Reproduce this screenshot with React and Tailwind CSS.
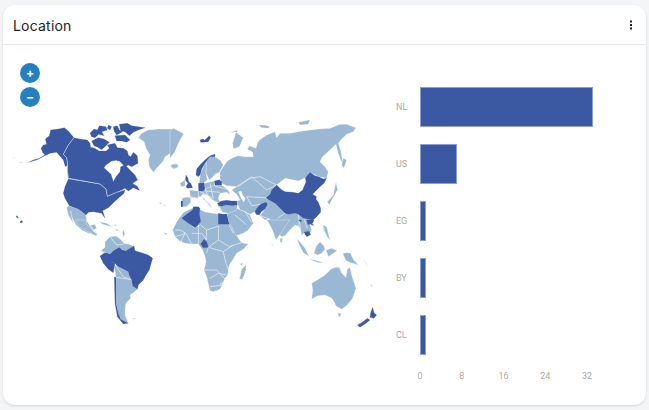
const D = "#3b58a3";
const L = "#9ab7d3";

// groups are traced in zoomed (3x) crop coordinates
const na = {
  t: "translate(0,115) scale(0.3333)",
  white: [],
  dark: [
    "85,142 100,135 118,130 135,120 128,112 123,100 130,90 140,88 136,72 148,62 152,45 175,42 193,38 205,48 222,68 205,90 190,118 200,128 203,150 196,155 190,135 170,112 150,115 135,122 110,135",
    "222,68 240,72 262,75 270,85 272,97 285,100 297,108 318,108 328,100 322,90 345,85 352,98 370,100 382,108 385,120 392,125 400,112 412,122 414,145 395,155 385,150 375,155 368,148 355,135 335,138 318,150 312,158 325,170 333,178 340,200 348,185 360,170 362,155 375,150 390,165 405,180 413,195 398,205 405,212 418,226 400,218 385,228 375,220 352,232 322,244 318,222 300,207 205,190 202,160 203,150 200,128 190,118 205,90",
    "205,192 300,208 318,222 322,244 350,232 375,224 372,235 355,250 342,262 325,278 308,287 315,310 305,295 280,290 265,292 258,300 248,292 235,282 208,272 195,250 190,235 195,215",
    "270,55 282,42 292,45 298,32 318,35 322,45 305,50 312,62 296,58 285,68 275,65",
    "325,30 335,35 330,45 322,40",
    "340,35 352,32 358,45 368,50 350,60 342,48",
    "358,28 382,25 395,32 435,38 415,45 400,52 388,62 375,50 362,48",
    "275,78 295,68 312,72 328,82 318,92 305,104 292,96 282,92",
    "345,62 375,60 390,75 380,82 365,78 350,78",
    "350,130 365,128 368,136 352,138",
    "60,320 66,316 68,322 62,324",
    "50,302 55,306 54,310 48,305",
    "402,208 412,214 418,226 405,218",
  ],
  light: [
    "205,272 235,282 248,292 258,300 260,318 270,332 285,328 290,340 278,346 268,356 245,345 228,330 215,305 212,288 220,325 205,300 200,278",
    "415,68 425,55 445,45 475,42 525,42 535,50 552,58 540,75 532,90 520,105 512,115 495,125 490,138 470,160 460,172 448,155 445,135 450,120 438,100 432,80",
    "510,152 528,145 536,155 520,162",
    "300,320 320,325 338,335 322,332 305,326",
    "345,342 358,345 350,348",
    "478,262 486,265 480,268",
    "492,268 498,270 494,274",
    "40,125 44,128 42,130",
    "58,140 68,142 62,144",
  ],
  lines: ["270,335 285,350"],
};

const sa = {
  t: "translate(60,220) scale(0.3333)",
  white: [],
  dark: [
    "150,103 160,92 178,82 186,90 198,92 210,85 222,78 225,92 245,98 265,105 278,115 272,135 268,150 258,165 250,180 235,195 232,208 218,198 215,180 207,165 205,155 185,145 172,138 165,130 150,125",
    "120,108 132,100 140,98 150,103 150,125 165,130 162,145 160,158 145,148 130,130",
    "163,170 168,172 168,210 168,250 175,280 182,298 205,310 190,312 172,290 165,250",
    "422,72 432,58 440,65 445,82 430,83",
  ],
  light: [
    "45,0 78,0 80,15 90,22 98,32 112,42 108,48 92,40 75,30 58,22",
    "122,92 135,82 135,65 150,50 168,48 178,55 192,70 205,72 222,78 210,85 198,92 186,90 178,82 160,92 150,103 140,98 132,100",
    "162,135 172,138 185,145 205,155 207,165 215,180 218,198 232,208 220,218 210,225 212,235 198,250 195,270 195,285 205,310 182,298 175,280 168,250 168,172",
    "338,30 350,5 369,-21 385,-30 405,-39 435,-24 474,-18 504,-15 512,5 520,30 535,55 545,68 565,72 550,88 530,100 518,120 508,135 505,150 503,165 495,175 480,208 460,215 450,212 440,170 432,150 438,125 435,110 428,90 415,72 395,72 375,70 358,62 345,50",
    "545,148 558,135 558,150 548,178 538,178",
    "312,38 322,40 318,44",
    "218,294 226,294 222,298",
    "190,28 187,38 192,55 194,40",
    "162,12 172,18 165,18",
    "540,132 548,128 546,138",
  ],
  lines: [
    "345,30 360,30 378,40 395,72",
    "378,0 402,24 422,15 440,30 438,60",
    "476,12 506,12 520,40",
    "440,30 476,18 475,60 445,82 440,100",
    "475,60 508,80 545,68",
    "445,82 490,95 498,130 505,150",
    "432,150 470,150 498,180",
    "360,70 375,40",
    "450,175 475,160 500,165",
    "450,200 490,195",
    "150,50 170,75 192,72",
    "122,92 150,103",
    "165,135 190,170 215,180",
    "168,172 210,178",
    "100,28 85,10",
    "395,40 425,40 440,60",
    "505,-15 505,12",
    "415,15 415,72",
    "345,50 378,40",
    "490,95 520,75",
    "480,190 490,188 486,196 480,190",
  ],
};

const eu = {
  t: "translate(170,115) scale(0.3333)",
  white: [
    "205,230 214,228 218,240 226,250 222,262 213,250",
    "148,240 165,236 178,245 172,252 152,250",
    "430,238 445,240 438,252 428,248",
  ],
  dark: [
    "320,210 332,222 345,230 368,232 385,235 398,225 408,200 406,188 420,172 435,182 446,185 460,192 470,190 462,205 450,215 435,230 428,238 440,245 438,252 445,262 452,280 452,292 440,305 428,316 412,312 400,310 385,298 375,295 355,298 345,295 330,280 315,265 298,256 288,248 300,238 305,225",
    "255,290 262,278 272,268 288,262 292,268 285,282 274,290 268,300 258,298",
    "142,265 155,258 170,256 185,258 200,258 202,270 188,272 170,270 155,274 146,272",
    "35,310 50,298 68,285 70,275 85,275 90,280 88,295 92,320 76,338 60,328",
    "145,295 158,298 170,297 175,318 178,328 145,328",
    "48,180 54,190 56,200 62,205 68,218 52,220 48,215 54,205 46,195",
    "78,180 80,162 90,150 105,135 120,122 135,118 135,125 120,125 108,140 96,160 90,180 85,185",
    "85,205 102,203 105,222 100,228 86,228",
    "133,198 148,194 155,200 155,210 135,210",
    "90,75 100,72 104,76 118,62 122,68 115,80 100,82 92,82",
    "33,258 38,258 38,275 33,275",
    "420,322 426,322 424,330",
    "404,352 414,352 416,360 406,360",
  ],
  light: [
    "150,170 160,155 172,138 188,128 205,122 225,125 250,125 248,112 232,102 238,92 258,100 262,85 268,75 290,60 315,50 320,68 330,55 360,55 385,50 420,45 445,42 480,40 510,28 530,28 558,38 550,50 530,58 515,72 505,85 512,105 520,150 510,130 503,110 498,88 480,105 458,125 450,140 465,155 475,170 470,190 446,185 420,172 406,188 385,198 345,190 320,210 290,225 245,185 200,215 170,212 155,205 150,190",
    "200,215 245,185 290,225 320,210 305,225 300,238 288,248 298,256 315,265 330,280 345,295 375,295 385,298 400,310 390,335 375,330 360,345 345,362 335,365 322,352 312,325 295,312 285,315 270,302 285,282 255,290 240,298 225,290 210,285 200,258 210,255 200,238 185,225",
    "385,298 400,310 412,312 428,316 420,330 425,345 415,360 405,350 395,362 392,345 385,330",
    "170,290 195,275 210,285 225,290 240,300 250,325 235,345 220,355 198,362 185,335 175,318",
    "145,272 155,274 170,270 188,272 202,270 200,285 175,295 158,292",
    "36,250 50,246 62,248 62,262 50,275 36,275",
    "58,225 85,228 86,240 85,250 62,248",
    "85,228 100,228 105,222 133,210 155,210 175,225 180,240 170,232 150,235 145,250 150,262 142,262 128,255 112,240 98,238 92,245 85,245",
    "98,245 108,258 122,270 125,280 112,264 100,252",
    "108,140 120,125 135,125 150,135 160,150 148,172 135,178 125,190 118,195 108,175",
    "108,140 98,160 90,180 88,205 102,203 112,195 108,175",
    "103,205 133,198 133,212 105,222",
    "0,45 10,40 40,55 25,85 15,110 0,130",
    "5,148 25,148 20,160 5,158",
    "30,205 45,195 46,212 34,215",
    "198,52 220,68 208,95 190,102 188,85",
    "265,30 285,30 300,35 295,40 275,38",
    "180,52 205,45 200,52",
    "385,22 420,14 415,28 390,30",
    "498,200 503,225 488,250 478,270 472,260 490,240",
    "458,330 472,345 462,350",
    "520,130 530,135 522,160 515,150",
  ],
  lines: [
    "205,215 240,190 270,185 290,195 320,210",
    "230,245 285,248 290,250",
    "230,245 245,272 272,268",
    "270,302 300,312",
    "385,298 392,345",
    "402,312 412,340",
    "225,290 245,322",
    "195,300 230,330",
    "90,230 130,250",
    "105,228 150,232",
    "120,205 130,250",
    "100,205 112,240",
    "60,245 85,250",
    "345,295 322,310",
    "133,212 175,225",
  ],
};

const oc = {
  t: "translate(260,220) scale(0.3333)",
  white: [],
  dark: [
    "132,36 148,34 152,44 140,50",
    "115,0 125,0 122,6",
    "140,0 162,0 158,10 144,14",
    "338,262 342,278 350,285 342,295 330,292 332,278",
    "292,315 305,308 322,295 330,300 318,310 300,322",
    "153,13 160,13 160,17",
  ],
  light: [
    "20,0 90,0 78,15 68,32 55,50 48,60 38,32 28,12",
    "110,55 122,68 135,85 148,110 130,98 118,75",
    "162,100 168,80 180,65 192,78 195,88 185,100 172,105",
    "145,117 165,120 190,128 175,128",
    "190,15 200,20 205,40 210,62 200,48 195,35",
    "198,90 215,85 232,92 220,100 205,110",
    "248,100 262,98 272,100 280,118 295,135 272,128 258,122",
    "155,190 175,178 195,165 205,155 212,148 225,142 238,142 245,160 258,172 262,148 270,142 275,165 288,205 278,235 262,255 245,268 228,258 222,245 215,235 195,225 172,228 155,238 158,210",
    "232,280 244,280 240,293",
    "60,55 68,55 66,68 60,65",
    "305,115 325,135 320,132",
    "330,192 338,198 335,200",
    "35,70 38,75 36,78",
    "378,178 382,180 380,185",
  ],
  lines: [],
};

function MapGroup({ g }) {
  return (
    <g transform={g.t} strokeLinejoin="round">
      {g.light.map((p, i) => (
        <polygon key={`l${i}`} points={p} fill={L} stroke="#ffffff" strokeWidth="1" />
      ))}
      {g.white.map((p, i) => (
        <polygon key={`w${i}`} points={p} fill="#ffffff" />
      ))}
      {g.lines.map((p, i) => (
        <polyline key={`x${i}`} points={p} fill="none" stroke="#e8eef5" strokeWidth="2.2" />
      ))}
      {g.dark.map((p, i) => (
        <polygon key={`d${i}`} points={p} fill={D} stroke={D} strokeWidth="0.6" />
      ))}
    </g>
  );
}

function BorderLines() {
  return (
    <g transform="translate(0,115) scale(0.3333)" fill="none" stroke="#c4cfe4" strokeWidth="2.4" strokeLinejoin="round">
      <polyline points="222,68 205,90 190,118 200,128 203,150 202,165 205,190 300,207 318,222 322,244 350,232 375,224" />
    </g>
  );
}

const bars = [
  { c: "NL", w: 173 },
  { c: "US", w: 37 },
  { c: "EG", w: 6 },
  { c: "BY", w: 6 },
  { c: "CL", w: 6 },
];
const ticks = ["0", "8", "16", "24", "32"];

export default function App() {
  return (
    <div className="w-[649px] h-[410px] bg-[#f4f5f7] pt-[5px] px-[3px] overflow-hidden" style={{ fontFamily: "Inter, 'Liberation Sans', sans-serif" }}>
      <div className="w-[643px] h-[400px] bg-white rounded-xl shadow-sm flex flex-col overflow-hidden">
        <div className="h-[40px] shrink-0 border-b border-[#e8e8e8] flex items-center justify-between pl-[10px] pr-[13px] pt-[2px]">
          <span className="text-[14px] text-[#222222] tracking-[0.2px]">Location</span>
          <svg width="4" height="10" viewBox="0 0 4 10" fill="#222222" className="-mt-[2px]">
            <rect x="1" y="0.5" width="2" height="2" />
            <rect x="1" y="4" width="2" height="2" />
            <rect x="1" y="7.5" width="2" height="2" />
          </svg>
        </div>
        <div className="flex flex-1">
          <div className="relative w-[381px] shrink-0">
            <svg className="block" width="381" height="360" viewBox="3 45 381 360">
              <MapGroup g={na} />
              <MapGroup g={sa} />
              <MapGroup g={eu} />
              <MapGroup g={oc} />
              <BorderLines />
            </svg>
            <div className="absolute left-[17px] top-[18px] flex flex-col gap-[4px]">
              <button className="w-5 h-5 rounded-full bg-[#2481bd] text-white text-[12px] font-bold leading-none flex items-center justify-center">+</button>
              <button className="w-5 h-5 rounded-full bg-[#2481bd] text-white text-[12px] font-bold leading-none flex items-center justify-center">−</button>
            </div>
          </div>
          <div className="flex flex-col pt-[42px] text-[9px] text-[#aaaaaa]" style={{ fontFamily: "Roboto, sans-serif" }}>
            {bars.map((b, i) => (
              <div key={b.c} className={`flex items-center h-[40px] ${i < 4 ? "mb-[17px]" : ""}`}>
                <span className="w-[24px] pl-[12px] leading-none">{b.c}</span>
                <div className="h-[40px] ml-[12px] bg-[#3b58a3] border border-[#8c9fd0]" style={{ width: b.w }} />
              </div>
            ))}
            <div className="flex ml-[30px] mt-[17px] w-[179px] justify-between leading-none">
              {ticks.map((t) => (
                <span key={t} className="w-[12px] text-center">{t}</span>
              ))}
            </div>
          </div>
        </div>
      </div>
    </div>
  );
}
